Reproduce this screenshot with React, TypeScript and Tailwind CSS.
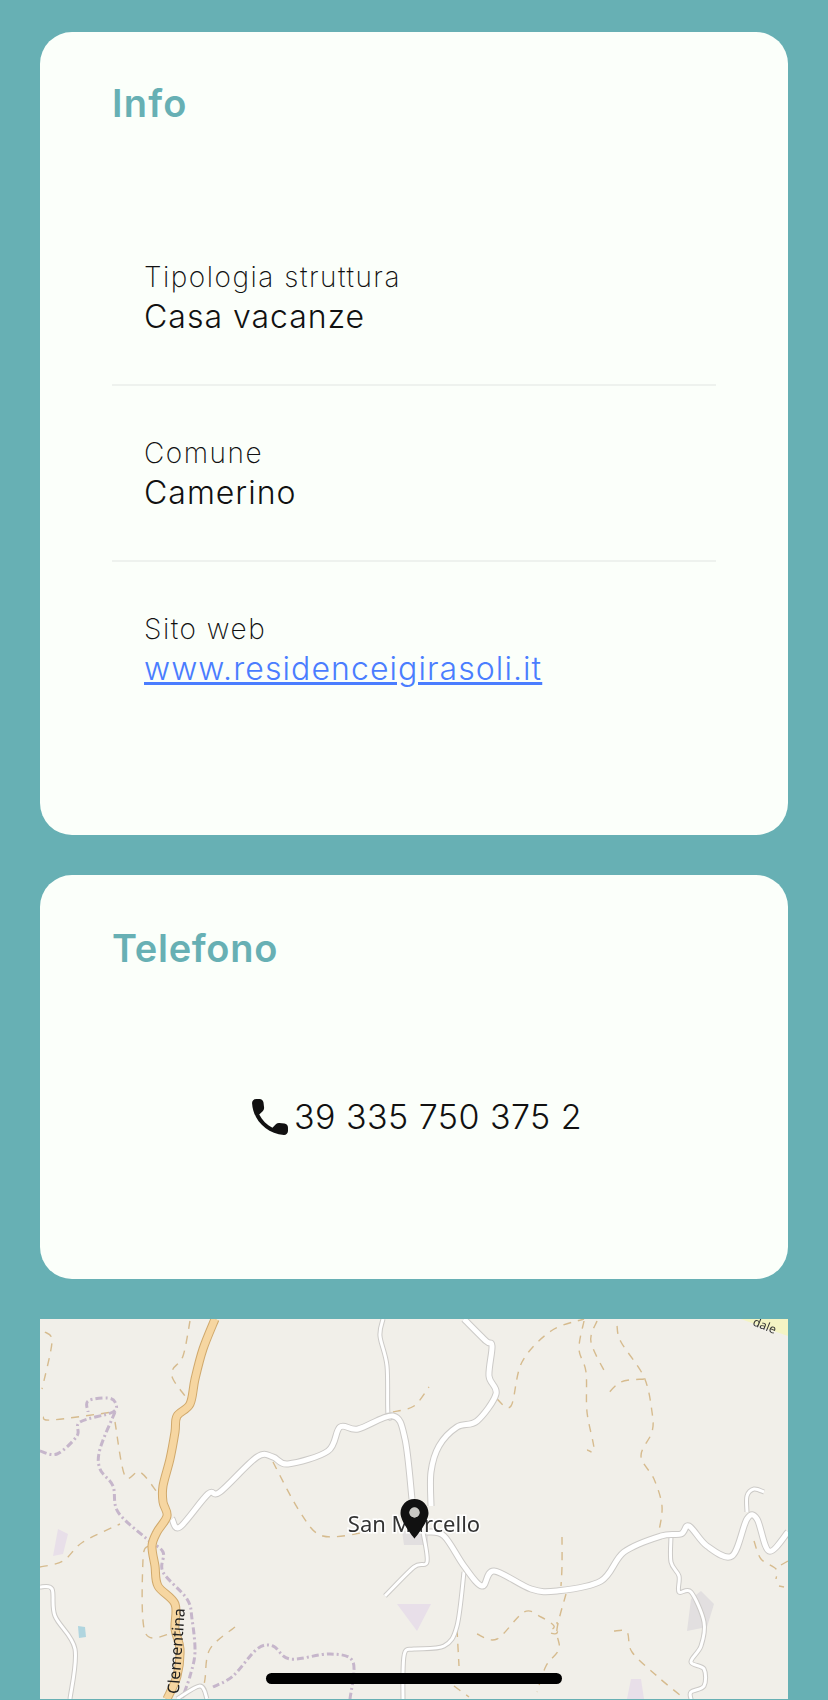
import React from 'react';

const font = { fontFamily: 'Inter, "Noto Sans", sans-serif' };

const rows = [
  { label: 'Tipologia struttura', value: 'Casa vacanze' },
  { label: 'Comune', value: 'Camerino' },
  { label: 'Sito web', value: 'www.residenceigirasoli.it', link: true },
];

const whiteRoads = [
  '172,1520 180,1528 208,1495 220,1493 257,1458 273,1458 288,1465 328,1452 340,1428 358,1430 393,1417 405,1440 412,1500',
  '464,1320 486,1342 492,1347 489,1377 496,1395 477,1422 457,1428 439,1447 431,1473 431,1507',
  '427,1533 444,1537 464,1567 482,1587 494,1572 531,1590 557,1592 601,1582 624,1553 661,1537 681,1535 689,1527 707,1547 732,1557 747,1520 757,1520 769,1552 788,1533',
];

const thinRoads = [
  '393,1417 388,1415 387,1367 380,1337 383,1320',
  '747,1513 747,1497 754,1490 764,1493',
  '671,1537 671,1563 679,1577 679,1593 691,1593 704,1623 701,1647 691,1663 704,1670 704,1687 691,1693 691,1700',
  '464,1573 457,1627 444,1647 414,1650 405,1653 403,1673 403,1700',
  '385,1597 414,1568 427,1563 423,1533',
  '40,1588 52,1590 55,1617 75,1650 70,1700',
  '177,1700 200,1687 207,1700',
];

const purple = [
  '40,1452 57,1455 77,1437 80,1423 113,1413 115,1403 107,1399 88,1402 88,1413',
  '115,1413 100,1450 100,1470 113,1487 118,1513 147,1540 163,1553 163,1573 187,1600 192,1620 195,1653 190,1677 182,1700',
  '213,1688 233,1677 257,1650 273,1647 290,1660 330,1655 353,1663 350,1700',
];

const tan = [
  '45,1333 52,1343 42,1390',
  '43,1418 52,1421 113,1413',
  '115,1423 125,1477 140,1473 157,1493',
  '190,1322 183,1357 173,1370 173,1380 185,1397',
  '40,1568 63,1562 83,1543 120,1525',
  '148,1547 143,1560 145,1633 170,1635',
  '273,1463 300,1513 323,1537 367,1533',
  '235,1628 210,1650 205,1680 203,1693',
  '393,1413 414,1407 429,1388',
  '497,1400 511,1407 522,1363 551,1332 584,1320',
  '584,1322 579,1350 586,1373 587,1413 594,1450 587,1451',
  '597,1322 591,1343 607,1377',
  '617,1327 621,1343 644,1378 652,1413 652,1433 641,1457 654,1480 662,1507 659,1532',
  '644,1380 621,1383 606,1397',
  '562,1538 562,1567 561,1587',
  '566,1595 557,1630 559,1650 546,1667 537,1693',
  '477,1635 497,1640 524,1613 541,1618 554,1627 549,1633 557,1634 557,1623',
  '614,1632 627,1633 632,1653 657,1677 681,1697',
  '457,1630 459,1667',
  '454,1687 469,1698',
  '754,1542 761,1560 776,1570 776,1580',
  '779,1587 784,1588',
  '781,1566 788,1562',
];

const mainRoad =
  '215,1320 203,1350 195,1380 190,1405 177,1417 175,1433 170,1460 163,1487 163,1503 167,1517 157,1533 152,1547 155,1567 158,1587 175,1605 175,1630 180,1650 177,1677 167,1700';

// turn a list of points into a rounded line
function smooth(points: string) {
  const p = points.split(' ').map((s) => s.split(',').map(Number));
  let d = `M${p[0][0]} ${p[0][1]}`;
  for (let i = 0; i < p.length - 1; i++) {
    const a = p[i - 1] || p[i];
    const b = p[i];
    const c = p[i + 1];
    const e = p[i + 2] || c;
    const c1x = b[0] + (c[0] - a[0]) / 6;
    const c1y = b[1] + (c[1] - a[1]) / 6;
    const c2x = c[0] - (e[0] - b[0]) / 6;
    const c2y = c[1] - (e[1] - b[1]) / 6;
    d += `C${c1x} ${c1y} ${c2x} ${c2y} ${c[0]} ${c[1]}`;
  }
  return d;
}

function MapDrawing() {
  return (
    <svg viewBox="40 1320 748 380" className="block w-full h-full blur-[0.6px]">
      <rect x="30" y="1310" width="768" height="400" fill="#f1efe9" />
      <polygon points="741,1320 788,1320 788,1337 768,1330" fill="#f4f4c4" />
      <polygon points="58,1530 68,1535 63,1555 53,1557" fill="#e8dfe9" />
      <polygon points="397,1605 431,1605 417,1632" fill="#e8dfe9" />
      <polygon points="631,1680 641,1680 644,1700 627,1700" fill="#e8dfe9" />
      <polygon points="701,1592 714,1605 707,1628 687,1632 691,1600" fill="#e2dfe0" />
      <polygon points="402,1532 428,1532 428,1546 404,1546" fill="#e2dfe0" />
      <polygon points="78,1627 85,1628 86,1638 79,1639" fill="#b0d5df" />

      {tan.map((p) => (
        <path key={p} d={smooth(p)} fill="none" stroke="#d6bb8e" strokeWidth="1.4" strokeDasharray="8 7" />
      ))}
      {purple.map((p) => (
        <path key={p} d={smooth(p)} fill="none" stroke="#c6b6cb" strokeWidth="3" strokeDasharray="7 3 2 3" />
      ))}

      {thinRoads.map((p) => (
        <path key={p} d={smooth(p)} fill="none" stroke="#cccac7" strokeWidth="5" />
      ))}
      {thinRoads.map((p) => (
        <path key={p + 'w'} d={smooth(p)} fill="none" stroke="#ffffff" strokeWidth="3" />
      ))}
      {whiteRoads.map((p) => (
        <path key={p} d={smooth(p)} fill="none" stroke="#cccac7" strokeWidth="7" />
      ))}
      {whiteRoads.map((p) => (
        <path key={p + 'w'} d={smooth(p)} fill="none" stroke="#ffffff" strokeWidth="5" />
      ))}

      <path d={smooth(mainRoad)} fill="none" stroke="#d0a96c" strokeWidth="9" />
      <path d={smooth(mainRoad)} fill="none" stroke="#f6d6a1" strokeWidth="7" />

      <text
        transform="translate(177 1722) rotate(-86)"
        fontSize="16"
        fill="#222"
        style={{ fontFamily: '"Noto Sans", sans-serif' }}
      >
        Via Clementina
      </text>
      <text
        transform="translate(752 1326) rotate(22)"
        fontSize="12"
        fill="#333"
        style={{ fontFamily: '"Noto Sans", sans-serif' }}
      >
        dale
      </text>
      <text
        x="414"
        y="1533"
        textAnchor="middle"
        fontSize="22"
        fill="#333"
        stroke="#ffffff"
        strokeWidth="3"
        paintOrder="stroke"
        style={{ fontFamily: '"Noto Sans", sans-serif' }}
      >
        San Marcello
      </text>

      <path
        fillRule="evenodd"
        fill="#111111"
        d="M414.5 1500c-7.7 0-14 6.200-14 14 0 9.500 14 25.500 14 25.500s14-16 14-25.500c0-7.800-6.300-14-14-14zm0 8.500a5 5 0 1 1 0 10 5 5 0 0 1 0-10z"
      />
      <circle cx="414.500" cy="1513.500" r="5" fill="#c9c8c4" />
    </svg>
  );
}

export default function App() {
  return (
    <div className="relative h-[1700px] overflow-hidden bg-[#67b0b4] px-10 pt-8 flex flex-col gap-10" style={font}>
      <section className="h-[803px] shrink-0 rounded-[32px] bg-[#fbfffa] px-[72px] pt-12">
        <h2 className="text-[38px] leading-[46px] font-semibold tracking-[1.2px] text-[#67b0b4]">Info</h2>
        <div className="mt-[84px]">
          {rows.map((r, i) => (
            <div
              key={r.label}
              className={`py-[47px] pl-8 ${i < rows.length - 1 ? 'border-b-2 border-[#eef2ee]' : ''}`}
            >
              <div className="text-[28px] leading-10 font-[250] tracking-[1.5px] text-[#111111]">{r.label}</div>
              {r.link ? (
                <a href="#" className="block text-[32px] leading-10 font-[350] tracking-[1.08px] text-[#4a7dff] underline">
                  {r.value}
                </a>
              ) : (
                <div className="text-[32px] leading-10 font-[350] tracking-[1px] text-[#111111]">{r.value}</div>
              )}
            </div>
          ))}
        </div>
      </section>

      <section className="h-[404px] shrink-0 rounded-[32px] bg-[#fbfffa] px-[72px] pt-[50px]">
        <h2 className="text-[38px] leading-[46px] font-semibold tracking-[0.7px] text-[#67b0b4]">Telefono</h2>
        <div className="mt-[122px] pl-[6px] flex items-center justify-center gap-1 text-[34px] leading-10 font-[350] tracking-[0.45px] text-[#111111]">
          <svg viewBox="0 0 24 24" className="w-12 h-12 -mx-[6px]" fill="#111111">
            <path d="M19.23 15.26l-2.54-.29c-.61-.07-1.21.14-1.64.57l-1.84 1.84c-2.83-1.44-5.15-3.75-6.59-6.59l1.85-1.85c.43-.43.64-1.03.57-1.64l-.29-2.52c-.12-1.01-.97-1.77-1.99-1.77H5.03c-1.13 0-2.07.94-2 2.07.53 8.54 7.36 15.36 15.89 15.89 1.13.07 2.07-.87 2.07-2v-1.73c.01-1.01-.75-1.86-1.76-1.98z" />
          </svg>
          <span className="ml-[2px]">39 335 750 375 2</span>
        </div>
      </section>

      <section className="h-[380px] shrink-0 overflow-hidden">
        <MapDrawing />
      </section>

      <div className="absolute left-[266px] top-[1673px] h-[11px] w-[296px] rounded-full bg-black" />
    </div>
  );
}
